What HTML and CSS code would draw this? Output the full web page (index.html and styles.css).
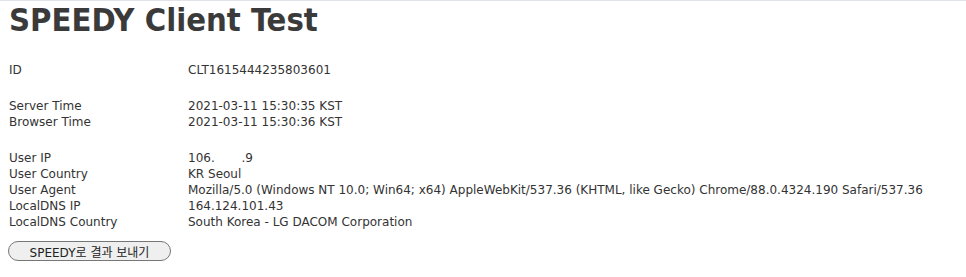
FILE: index.html
```html
<!DOCTYPE html>
<html lang="ko">
<head>
    <meta charset="UTF-8">
    <title>SPEEDY Client Test</title>
    <link rel="stylesheet" href="styles.css">
</head>
<body>
    <h1 class="title">SPEEDY Client Test</h1>

    <div class="group first">
        <div class="row"><span class="label">ID</span><span class="value">CLT1615444235803601</span></div>
    </div>

    <div class="group">
        <div class="row"><span class="label">Server Time</span><span class="value">2021-03-11 15:30:35 KST</span></div>
        <div class="row"><span class="label">Browser Time</span><span class="value">2021-03-11 15:30:36 KST</span></div>
    </div>

    <div class="group">
        <div class="row"><span class="label">User IP</span><span class="value">106.<span class="masked">&nbsp;&nbsp;&nbsp;&nbsp;&nbsp;&nbsp;&nbsp;</span>.9</span></div>
        <div class="row"><span class="label">User Country</span><span class="value">KR Seoul</span></div>
        <div class="row"><span class="label">User Agent</span><span class="value">Mozilla/5.0 (Windows NT 10.0; Win64; x64) AppleWebKit/537.36 (KHTML, like Gecko) Chrome/88.0.4324.190 Safari/537.36</span></div>
        <div class="row"><span class="label">LocalDNS IP</span><span class="value">164.124.101.43</span></div>
        <div class="row"><span class="label">LocalDNS Country</span><span class="value">South Korea - LG DACOM Corporation</span></div>
    </div>

    <button class="send-button">SPEEDY로 결과 보내기</button>
</body>
</html>
```

FILE: styles.css
```css
body {
    margin: 0;
    padding: 0 8px;
    border-top: 1px solid #e1e3ea;
    background: #fff;
    color: #333;
    font-family: "DejaVu Sans", "Noto Sans CJK KR", sans-serif;
    font-size: 12px;
    line-height: 16px;
}
.title {
    margin: 0;
    padding-left: 1px;
    font-size: 32.5px;
    font-stretch: condensed;
    line-height: 38px;
    font-weight: bold;
    color: #3a3a3a;
}
.group {
    margin-top: 20px;
}
.group.first {
    margin-top: 23px;
}
.row {
    display: grid;
    grid-template-columns: 180px 1fr;
    white-space: nowrap;
}
.label {
    padding-left: 1px;
}
.masked {
    color: transparent;
}
.send-button {
    margin-top: 11px;
    height: 20px;
    width: 163px;
    padding: 0;
    border: 1px solid #767676;
    border-radius: 10px;
    background: #efefef;
    color: #222;
    font-family: "DejaVu Sans", "Noto Sans CJK KR", sans-serif;
    font-size: 12px;
}
```
